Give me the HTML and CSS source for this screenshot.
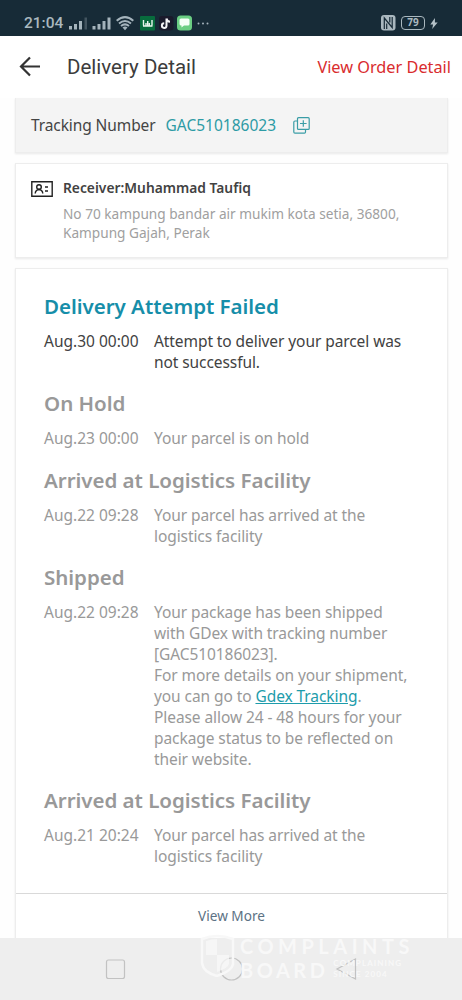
FILE: index.html
```html
<!DOCTYPE html>
<html lang="en">
<head>
<meta charset="utf-8">
<title>Delivery Detail</title>
<link rel="stylesheet" href="styles.css">
</head>
<body>
<div class="status">
  <span class="clock">21:04</span>
  <svg class="signals" width="150" height="20" viewBox="0 0 150 20">
    <g fill="#a5b4bc"><path d="M1 14h3v3.500H1zM6 12h3v5.500H6zM11 9h3v8.500h-3z"/><path d="M16.500 5.500h2.500v12h-2.500z" opacity=".3"/><path d="M24.500 14h3v3.500h-3zM29.500 12h3v5.500h-3zM34.500 9h3v8.500h-3zM39.500 5.500h3v12h-3z"/><path d="M54.500 15.500q2.500-2 5 0L57 18.200z"/></g>
    <g fill="none" stroke="#a5b4bc" stroke-width="2"><path d="M48.700 8.700Q57 1.500 65.300 8.700M51 11.500Q57 6.500 63 11.500M53 14Q57 10.800 61 14"/></g>
    <rect x="72" y="4" width="15" height="14.500" rx="1" fill="#086c3d"/><path d="M75.500 8v5.500M78 11v2.500M79.700 9v4.500M81.300 11v2.500M84 8v5.500M75 14h9.500" stroke="#e8f5ed" stroke-width="1.400" fill="none"/>
    <rect x="91" y="4" width="14.500" height="14.500" rx="3" fill="#1a1a2b"/><path d="M98.500 6.500v7.300a2.300 2.300 0 1 1-2.300-2.500M98.500 6.500q.5 3 3.500 3.200" stroke="#f2f2f5" stroke-width="2" fill="none"/>
    <rect x="109" y="3.500" width="15" height="15" rx="3.500" fill="#6bce83"/><path d="M113 6.500h7q1.500 0 1.500 1.500v4q0 1.500-1.500 1.500h-4l-2.500 2v-2q-2 0-2-1.500V8q0-1.500 1.500-1.500z" fill="#f5fff7"/>
    <g fill="#a5b4bc"><circle cx="130.500" cy="11.500" r="1"/><circle cx="135" cy="11.500" r="1"/><circle cx="139.500" cy="11.500" r="1"/></g>
  </svg>
  <div class="power">
    <svg width="15" height="16" viewBox="0 0 15 16"><rect width="14.500" height="15.500" rx="3" fill="#aab8bf"/><path d="M3.300 14V3L11.200 12.500V2M5.700 14V8.500M8.800 7.500V2" fill="none" stroke="#172b37" stroke-width="1.200"/></svg>
    <span class="battery">79</span>
    <svg width="8" height="11" viewBox="0 0 8 12"><path d="M5 0 0 7h3l-1 5 6-7H5z" fill="#b5c1c7"/></svg>
  </div>
</div>
<header class="header">
  <svg width="22" height="22" viewBox="0 0 22 22" fill="none" stroke="#333" stroke-width="2.200"><path d="M21 10.500H2.500M11 1.500 2 10.500 11 19.500"/></svg>
  <h1 class="title">Delivery Detail</h1>
  <a class="order">View Order Detail</a>
</header>
<main class="main">
  <section class="card tracking">
    <span class="label">Tracking Number</span>
    <span class="number">GAC510186023</span>
    <svg width="17" height="17" viewBox="0 0 17 17" fill="none" stroke="#3a9da6" stroke-width="1.200"><rect x="4.500" y=".7" width="11.700" height="11.700" rx="1"/><path d="M4.500 4H2Q.8 4 .8 5.200V15Q.8 16.200 2 16.200h9.500q1 0 1-1.200v-2.600M10.300 3.300v6.500M7 6.500h6.600"/></svg>
  </section>
  <section class="card receiver">
    <svg class="idcard" width="22" height="16" viewBox="0 0 22 16" fill="none" stroke="#222" stroke-width="1.400"><path d="M.8.8h20.400v14.400H.8zM4.200 12.500Q4.500 9 8 8.500q3.500.5 3.800 4M14 6h3M14 10h3"/><circle cx="8" cy="6" r="2.300"/></svg>
    <div>
      <h2 class="name">Receiver:Muhammad Taufiq</h2>
      <p class="address">No 70 kampung bandar air mukim kota setia, 36800,<br>Kampung Gajah, Perak</p>
    </div>
  </section>
  <section class="card timeline">
    <article class="event current"><h3>Delivery Attempt Failed</h3><div class="row"><time>Aug.30 00:00</time><p>Attempt to deliver your parcel was<br>not successful.</p></div></article>
    <article class="event"><h3>On Hold</h3><div class="row"><time>Aug.23 00:00</time><p>Your parcel is on hold</p></div></article>
    <article class="event"><h3>Arrived at Logistics Facility</h3><div class="row"><time>Aug.22 09:28</time><p>Your parcel has arrived at the<br>logistics facility</p></div></article>
    <article class="event"><h3>Shipped</h3><div class="row"><time>Aug.22 09:28</time><p>Your package has been shipped<br>with GDex with tracking number<br>[GAC510186023].<br>For more details on your shipment,<br>you can go to <a class="link">Gdex Tracking</a>.<br>Please allow 24 - 48 hours for your<br>package status to be reflected on<br>their website.</p></div></article>
    <article class="event"><h3>Arrived at Logistics Facility</h3><div class="row"><time>Aug.21 20:24</time><p>Your parcel has arrived at the<br>logistics facility</p></div></article>
    <a class="more">View More</a>
  </section>
</main>
<nav class="nav">
  <svg class="keys" width="462" height="62" viewBox="0 0 462 62" fill="none" stroke="#c2c2c2" stroke-width="1.200"><rect x="106.500" y="22" width="18" height="18.500" rx="2"/><circle cx="231.500" cy="31" r="11"/><path d="M355.500 21v20L337 31z"/></svg>
  <div class="watermark">
    <svg width="35" height="43" viewBox="0 0 35 43"><path d="M2 5Q17-1 33 5v25q-1 7-16 12Q3 38 2 29z" fill="none" stroke="#f8f8f8" stroke-width="2.500"/><path d="M6 7q5-2 11-2v16H6zM17 21h12v9q-1 4-12 8z" fill="#f8f8f8" opacity=".75"/></svg>
    <div class="words"><span class="word1">COMPLAINTS</span><div class="line2"><span class="word2">BOARD</span><div class="small"><span>COMPLAINING</span><span>SINCE 2004</span></div></div></div>
  </div>
</nav>
</body>
</html>
```
FILE: styles.css
```css
* { box-sizing: border-box; }
body { margin: 0; width: 462px; height: 1000px; overflow: hidden; background: #fefefe; color: #444; font-family: "Noto Sans", sans-serif; display: flex; flex-direction: column; }
h1, h2, h3, p { margin: 0; }
svg { display: block; flex: none; }
.status { height: 36px; flex: none; background: #172b37; display: flex; align-items: flex-start; padding: 12px 24px 0 24px; color: #aab8bf; }
.clock { width: 44px; font: 500 15.500px/23px Roboto, sans-serif; }
.power { margin-left: auto; display: flex; align-items: center; padding-top: 3px; gap: 5px; }
.battery { width: 24px; height: 14px; border: 1.500px solid #aab8bf; border-radius: 4px; font: 700 10px/11px "Noto Sans", sans-serif; text-align: center; }
.header { height: 62px; flex: none; display: flex; align-items: center; padding: 0 11px 1px 19px; background: #fff; }
.title { margin-left: 26px; font: 400 20.500px/30px Roboto, sans-serif; color: #3c3c3c; }
.order { margin-left: auto; font-size: 16.300px; line-height: 22px; color: #d92c2e; }
.main { flex: none; height: 840px; padding: 0 15px; display: flex; flex-direction: column; gap: 10px; }
.card { background: #fff; border: 1px solid #ededed; box-shadow: 0 1px 2px #e9e9e9; width: 433px; }
.tracking { height: 55px; flex: none; background: #f4f4f4; border-top: 0; display: flex; align-items: center; padding-left: 15px; font-size: 15.500px; }
.label { letter-spacing: -0.100px; }
.number { margin-left: 10px; color: #2d9ba5; }
.tracking svg { margin-left: 17px; }
.receiver { height: 95px; flex: none; display: flex; padding: 14px 15px 0; gap: 10px; }
.idcard { margin-top: 3px; }
.name { font-size: 13.800px; line-height: 20px; font-weight: 600; color: #424242; }
.address { margin-top: 7px; font-size: 13.650px; line-height: 18.500px; color: #a0a0a0; white-space: nowrap; }
.timeline { height: 670px; flex: none; padding: 23px 0 0 28px; border-bottom: 0; display: flex; flex-direction: column; }
.event { color: #999; margin-bottom: 17.300px; }
.event h3 { font-size: 20.550px; line-height: 28px; height: 39px; margin-bottom: 0; font-weight: 600; letter-spacing: -0.040px; }
.event + .event { margin-top: -1px; }
.row { display: flex; font-size: 15.500px; line-height: 21px; letter-spacing: -0.080px; }
.row time { width: 110px; flex: none; letter-spacing: 0; }
.row p { white-space: nowrap; }
.current { color: #424242; }
.current h3 { color: #168ea9; }
.link { color: #1d9cab; text-decoration: underline; }
.more { margin: auto 0 0 -28px; height: 45px; border-top: 1px solid #d9d9d9; text-align: center; font-size: 13.600px; line-height: 44px; color: #5c7284; }
.nav { position: relative; height: 62px; flex: none; background: #eee; }
.watermark { position: absolute; left: 200px; top: -4px; display: flex; gap: 5px; color: #f8f8f8; }
.words { font: 700 20px/24px Lato, sans-serif; letter-spacing: 4.500px; white-space: nowrap; }
.word1 { display: block; height: 24px; }
.line2 { display: flex; gap: 5px; }
.word2 { letter-spacing: 3.500px; }
.small { font-size: 8px; line-height: 10px; letter-spacing: 1.100px; display: flex; flex-direction: column; gap: 1px; }
```
